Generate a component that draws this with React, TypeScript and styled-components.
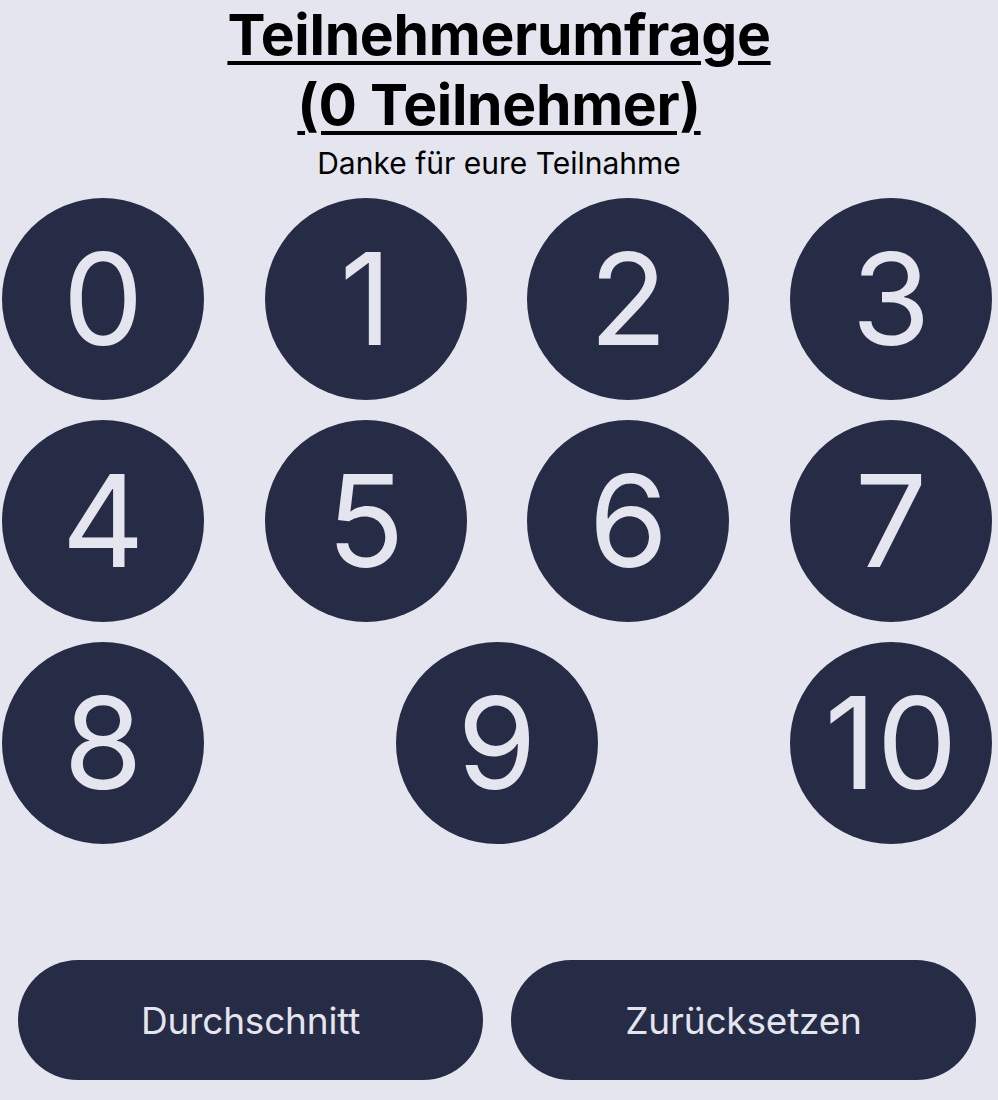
import React from "react";
import styled, { createGlobalStyle } from "styled-components";

const GlobalStyle = createGlobalStyle`
  html, body {
    margin: 0;
    padding: 0;
    background: #e4e5ee;
    font-family: Inter, "Noto Sans", "Liberation Sans", sans-serif;
  }
`;

const Page = styled.main`
  width: 998px;
  min-height: 1100px;
  display: flex;
  flex-direction: column;
  align-items: stretch;
  background: #e4e5ee;
  color: #000;
`;

const Header = styled.header`
  display: flex;
  flex-direction: column;
  align-items: center;
`;

const Title = styled.h1`
  margin: 0;
  font-size: 57px;
  line-height: 70px;
  font-weight: 700;
  letter-spacing: -0.3px;
  text-align: center;
  text-decoration: underline;
  text-decoration-thickness: 4px;
  text-underline-offset: 6px;
  width: 570px;
`;

const Subtitle = styled.p`
  margin: 5px 0 0;
  font-size: 30px;
  line-height: 36px;
  font-weight: 400;
  text-align: center;
`;

const Grid = styled.section`
  margin: 17px 6px 0 2px;
  display: flex;
  flex-wrap: wrap;
  justify-content: space-between;
  row-gap: 20px;
`;

const Circle = styled.button`
  width: 202px;
  height: 202px;
  border-radius: 50%;
  border: none;
  padding: 0;
  background: #272c46;
  color: #e4e5ee;
  font-family: Inter, "Noto Sans", sans-serif;
  font-size: 128px;
  font-weight: 400;
  display: flex;
  align-items: center;
  justify-content: center;
  line-height: 1;
  cursor: pointer;
`;

const Footer = styled.footer`
  margin: 116px 22px 0 18px;
  display: grid;
  grid-template-columns: 1fr 1fr;
  column-gap: 28px;
`;

const ActionButton = styled.button`
  height: 120px;
  border: none;
  border-radius: 60px;
  background: #272c46;
  color: #e4e5ee;
  font-family: Inter, "Noto Sans", sans-serif;
  font-size: 37px;
  font-weight: 400;
  letter-spacing: -0.2px;
  cursor: pointer;
`;

const values = [0, 1, 2, 3, 4, 5, 6, 7, 8, 9, 10];

export default function App() {
  return (
    <>
      <GlobalStyle />
      <Page>
        <Header>
          <Title>Teilnehmerumfrage (0 Teilnehmer)</Title>
          <Subtitle>Danke für eure Teilnahme</Subtitle>
        </Header>
        <Grid>
          {values.map((v) => (
            <Circle key={v}>{v}</Circle>
          ))}
        </Grid>
        <Footer>
          <ActionButton>Durchschnitt</ActionButton>
          <ActionButton>Zurücksetzen</ActionButton>
        </Footer>
      </Page>
    </>
  );
}
